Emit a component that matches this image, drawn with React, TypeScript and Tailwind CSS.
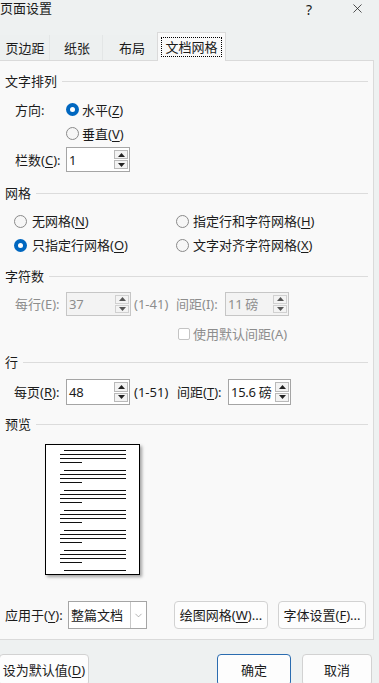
import React from 'react';
import { X, ChevronDown } from 'lucide-react';

const font = { fontFamily: '"Noto Sans", "Noto Sans CJK SC", sans-serif' };

const U: React.FC<{ children: React.ReactNode }> = ({ children }) => (
  <span className="underline underline-offset-[2px] decoration-1">{children}</span>
);

const Radio: React.FC<{ checked?: boolean }> = ({ checked }) =>
  checked ? (
    <span className="grid h-[13px] w-[13px] shrink-0 place-items-center rounded-full bg-[#0067c0]">
      <span className="h-[5px] w-[5px] rounded-full bg-white" />
    </span>
  ) : (
    <span className="h-[13px] w-[13px] shrink-0 rounded-full border border-[#8a8a8a] bg-[#f6f6f6]" />
  );

const Tri: React.FC<{ up?: boolean; disabled?: boolean }> = ({ up, disabled }) => (
  <span className={`grid flex-1 place-items-center border bg-[#f3f3f3] ${disabled ? 'border-[#d0d0d0]' : 'border-[#b9b9b9]'}`}>
    <svg width="7" height="4" viewBox="0 0 7 4">
      <path d={up ? 'M0 4 L3.5 0 L7 4 Z' : 'M0 0 L3.5 4 L7 0 Z'} fill={disabled ? '#555' : '#222'} />
    </svg>
  </span>
);

const Spin: React.FC<{ value: string; disabled?: boolean; className: string }> = ({ value, disabled, className }) => (
  <div className={`flex h-full items-center border ${disabled ? 'border-[#c6c6c6] bg-[#f3f3f3] text-[#8d8d8d]' : 'border-[#a5a5a5] bg-white'} ${className}`}>
    <span className="min-w-0 flex-1 overflow-hidden whitespace-nowrap pl-[2px] tracking-[-0.3px]">{value}</span>
    <span className="mr-[1px] flex h-[calc(100%-4px)] w-[14px] shrink-0 flex-col gap-[1px]">
      <Tri up disabled={disabled} />
      <Tri disabled={disabled} />
    </span>
  </div>
);

const Header: React.FC<{ title: string; className: string }> = ({ title, className }) => (
  <div className={`flex h-[20px] items-center pl-[5px] ${className}`}>
    <span>{title}</span>
    <span className="ml-[5px] mr-[5px] h-px flex-1 bg-[#dcdcdc]" />
  </div>
);

const Btn: React.FC<{ children: React.ReactNode; className: string; primary?: boolean }> = ({ children, className, primary }) => (
  <div className={`grid place-items-center rounded-[4px] border bg-[#fdfdfd] ${primary ? 'border-[#2b6cb0]' : 'border-[#d2d2d2]'} ${className}`}>
    <span className="whitespace-nowrap">{children}</span>
  </div>
);

const Preview: React.FC = () => {
  const lines: React.ReactNode[] = [];
  for (let g = 0; g < 7; g++) {
    const y = 5.5 + g * 20;
    lines.push(<line key={`a${g}`} x1={18} x2={80} y1={y} y2={y} />);
    if (g === 6) break;
    lines.push(<line key={`b${g}`} x1={14} x2={80} y1={y + 4} y2={y + 4} />);
    lines.push(<line key={`c${g}`} x1={14} x2={80} y1={y + 8} y2={y + 8} />);
    lines.push(<line key={`d${g}`} x1={14} x2={36} y1={y + 12} y2={y + 12} />);
  }
  return (
    <div className="ml-[45px] mt-[10px] h-[131px] w-[95px] border border-black bg-white shadow-[2px_2px_3px_rgba(0,0,0,0.35)]">
      <svg width="93" height="129" viewBox="0 0 93 129" stroke="#111" strokeWidth="1">
        {lines}
      </svg>
    </div>
  );
};

export default function App() {
  return (
    <div style={font} className="relative h-[683px] w-[379px] overflow-hidden bg-[#eef1f1] text-[13px] leading-[16px] text-[#1b1b1b]">
      <div className="flex h-[32px] items-start">
        <span>页面设置</span>
        <span className="ml-auto mr-[38px] mt-px text-[14px] leading-[18px]">?</span>
        <X size={15} strokeWidth={1.2} className="mr-[14px] mt-[1px]" />
      </div>

      <div className="flex h-[28px] items-end">
        <div className="flex h-[25px] w-[50px] items-center justify-center border-r border-[#e3e6e6] bg-[#edf0f0] pl-[1px]">页边距</div>
        <div className="flex h-[25px] w-[53px] items-center justify-center border-r border-[#e3e6e6] bg-[#edf0f0] pl-[2px]">纸张</div>
        <div className="flex h-[25px] w-[54px] items-center justify-center bg-[#edf0f0] pl-[4px]">布局</div>
        <div className="relative z-10 -mb-px flex h-[29px] w-[69px] items-center justify-center border border-b-0 border-[#dadada] bg-[#f9f9f9]">
          <span className="border border-dotted border-black px-[3px] py-px">文档网格</span>
        </div>
      </div>

      <div className="flex h-[580px] w-[374px] flex-col border-r border-t border-b border-[#dadada] bg-[#f9f9f9] pt-[10px]">
        <Header title="文字排列" className="" />
        <div className="mt-[7px] flex h-[23px] items-center pl-[15px]">
          <span className="w-[51px]">方向:</span>
          <Radio checked />
          <span className="ml-[3px]">水平(<U>Z</U>)</span>
        </div>
        <div className="mt-px flex h-[23px] items-center pl-[66px]">
          <Radio />
          <span className="ml-[3px]">垂直(<U>V</U>)</span>
        </div>
        <div className="mt-[2px] flex h-[25px] items-center pl-[15px]">
          <span className="w-[51px]">栏数(<U>C</U>):</span>
          <Spin value="1" className="w-[64px]" />
        </div>

        <Header title="网格" className="mt-[11px]" />
        <div className="mt-[6px] flex h-[24px] items-center pl-[14px]">
          <span className="flex w-[162px] items-center">
            <Radio />
            <span className="ml-[5px]">无网格(<U>N</U>)</span>
          </span>
          <Radio />
          <span className="ml-[4px]">指定行和字符网格(<U>H</U>)</span>
        </div>
        <div className="flex h-[24px] items-center pl-[14px]">
          <span className="flex w-[162px] items-center">
            <Radio checked />
            <span className="ml-[5px]">只指定行网格(<U>O</U>)</span>
          </span>
          <Radio />
          <span className="ml-[4px]">文字对齐字符网格(<U>X</U>)</span>
        </div>

        <Header title="字符数" className="mt-[9px]" />
        <div className="mt-[6px] flex h-[24px] items-center pl-[15px] text-[#8d8d8d]">
          <span className="w-[51px]">每行(E):</span>
          <Spin value="37" disabled className="w-[65px]" />
          <span className="ml-[3px] w-[42px]">(1-41)</span>
          <span className="w-[49px]">间距(I):</span>
          <Spin value="11 磅" disabled className="w-[64px]" />
        </div>
        <div className="mt-[8px] flex h-[20px] items-center pl-[178px] text-[#8d8d8d]">
          <span className="h-[12px] w-[12px] rounded-[2px] border border-[#c4c4c4] bg-white" />
          <span className="ml-[3px]">使用默认间距(A)</span>
        </div>

        <Header title="行" className="mt-[8px]" />
        <div className="mt-[7px] flex h-[26px] items-center pl-[14px]">
          <span className="w-[52px]">每页(<U>R</U>):</span>
          <Spin value="48" className="w-[64px]" />
          <span className="ml-[4px] w-[43px]">(1-51)</span>
          <span className="w-[51px]">间距(<U>T</U>):</span>
          <Spin value="15.6 磅" className="w-[63px]" />
        </div>

        <Header title="预览" className="mt-[9px]" />
        <Preview />

        <div className="mt-[26px] flex h-[28px] items-center pl-[5px]">
          <span className="w-[63px]">应用于(<U>Y</U>):</span>
          <div className="flex h-full w-[79px] items-center border border-[#a5a5a5] bg-white">
            <span className="flex-1 pl-[2px]">整篇文档</span>
            <span className="flex h-full w-[16px] items-center justify-center border-l border-[#c8c8c8]">
              <ChevronDown size={11} strokeWidth={1.2} color="#777" />
            </span>
          </div>
          <Btn className="ml-[27px] h-full w-[94px]">绘图网格(<U>W</U>)...</Btn>
          <Btn className="ml-[10px] h-full w-[88px]">字体设置(<U>F</U>)...</Btn>
        </div>
      </div>

      <div className="mt-[14px] flex">
        <Btn className="-ml-[1px] h-[32px] w-[90px]">设为默认值(<U>D</U>)</Btn>
        <Btn primary className="ml-[128px] h-[32px] w-[74px]">确定</Btn>
        <Btn className="ml-[11px] h-[32px] w-[70px]">取消</Btn>
      </div>
    </div>
  );
}
